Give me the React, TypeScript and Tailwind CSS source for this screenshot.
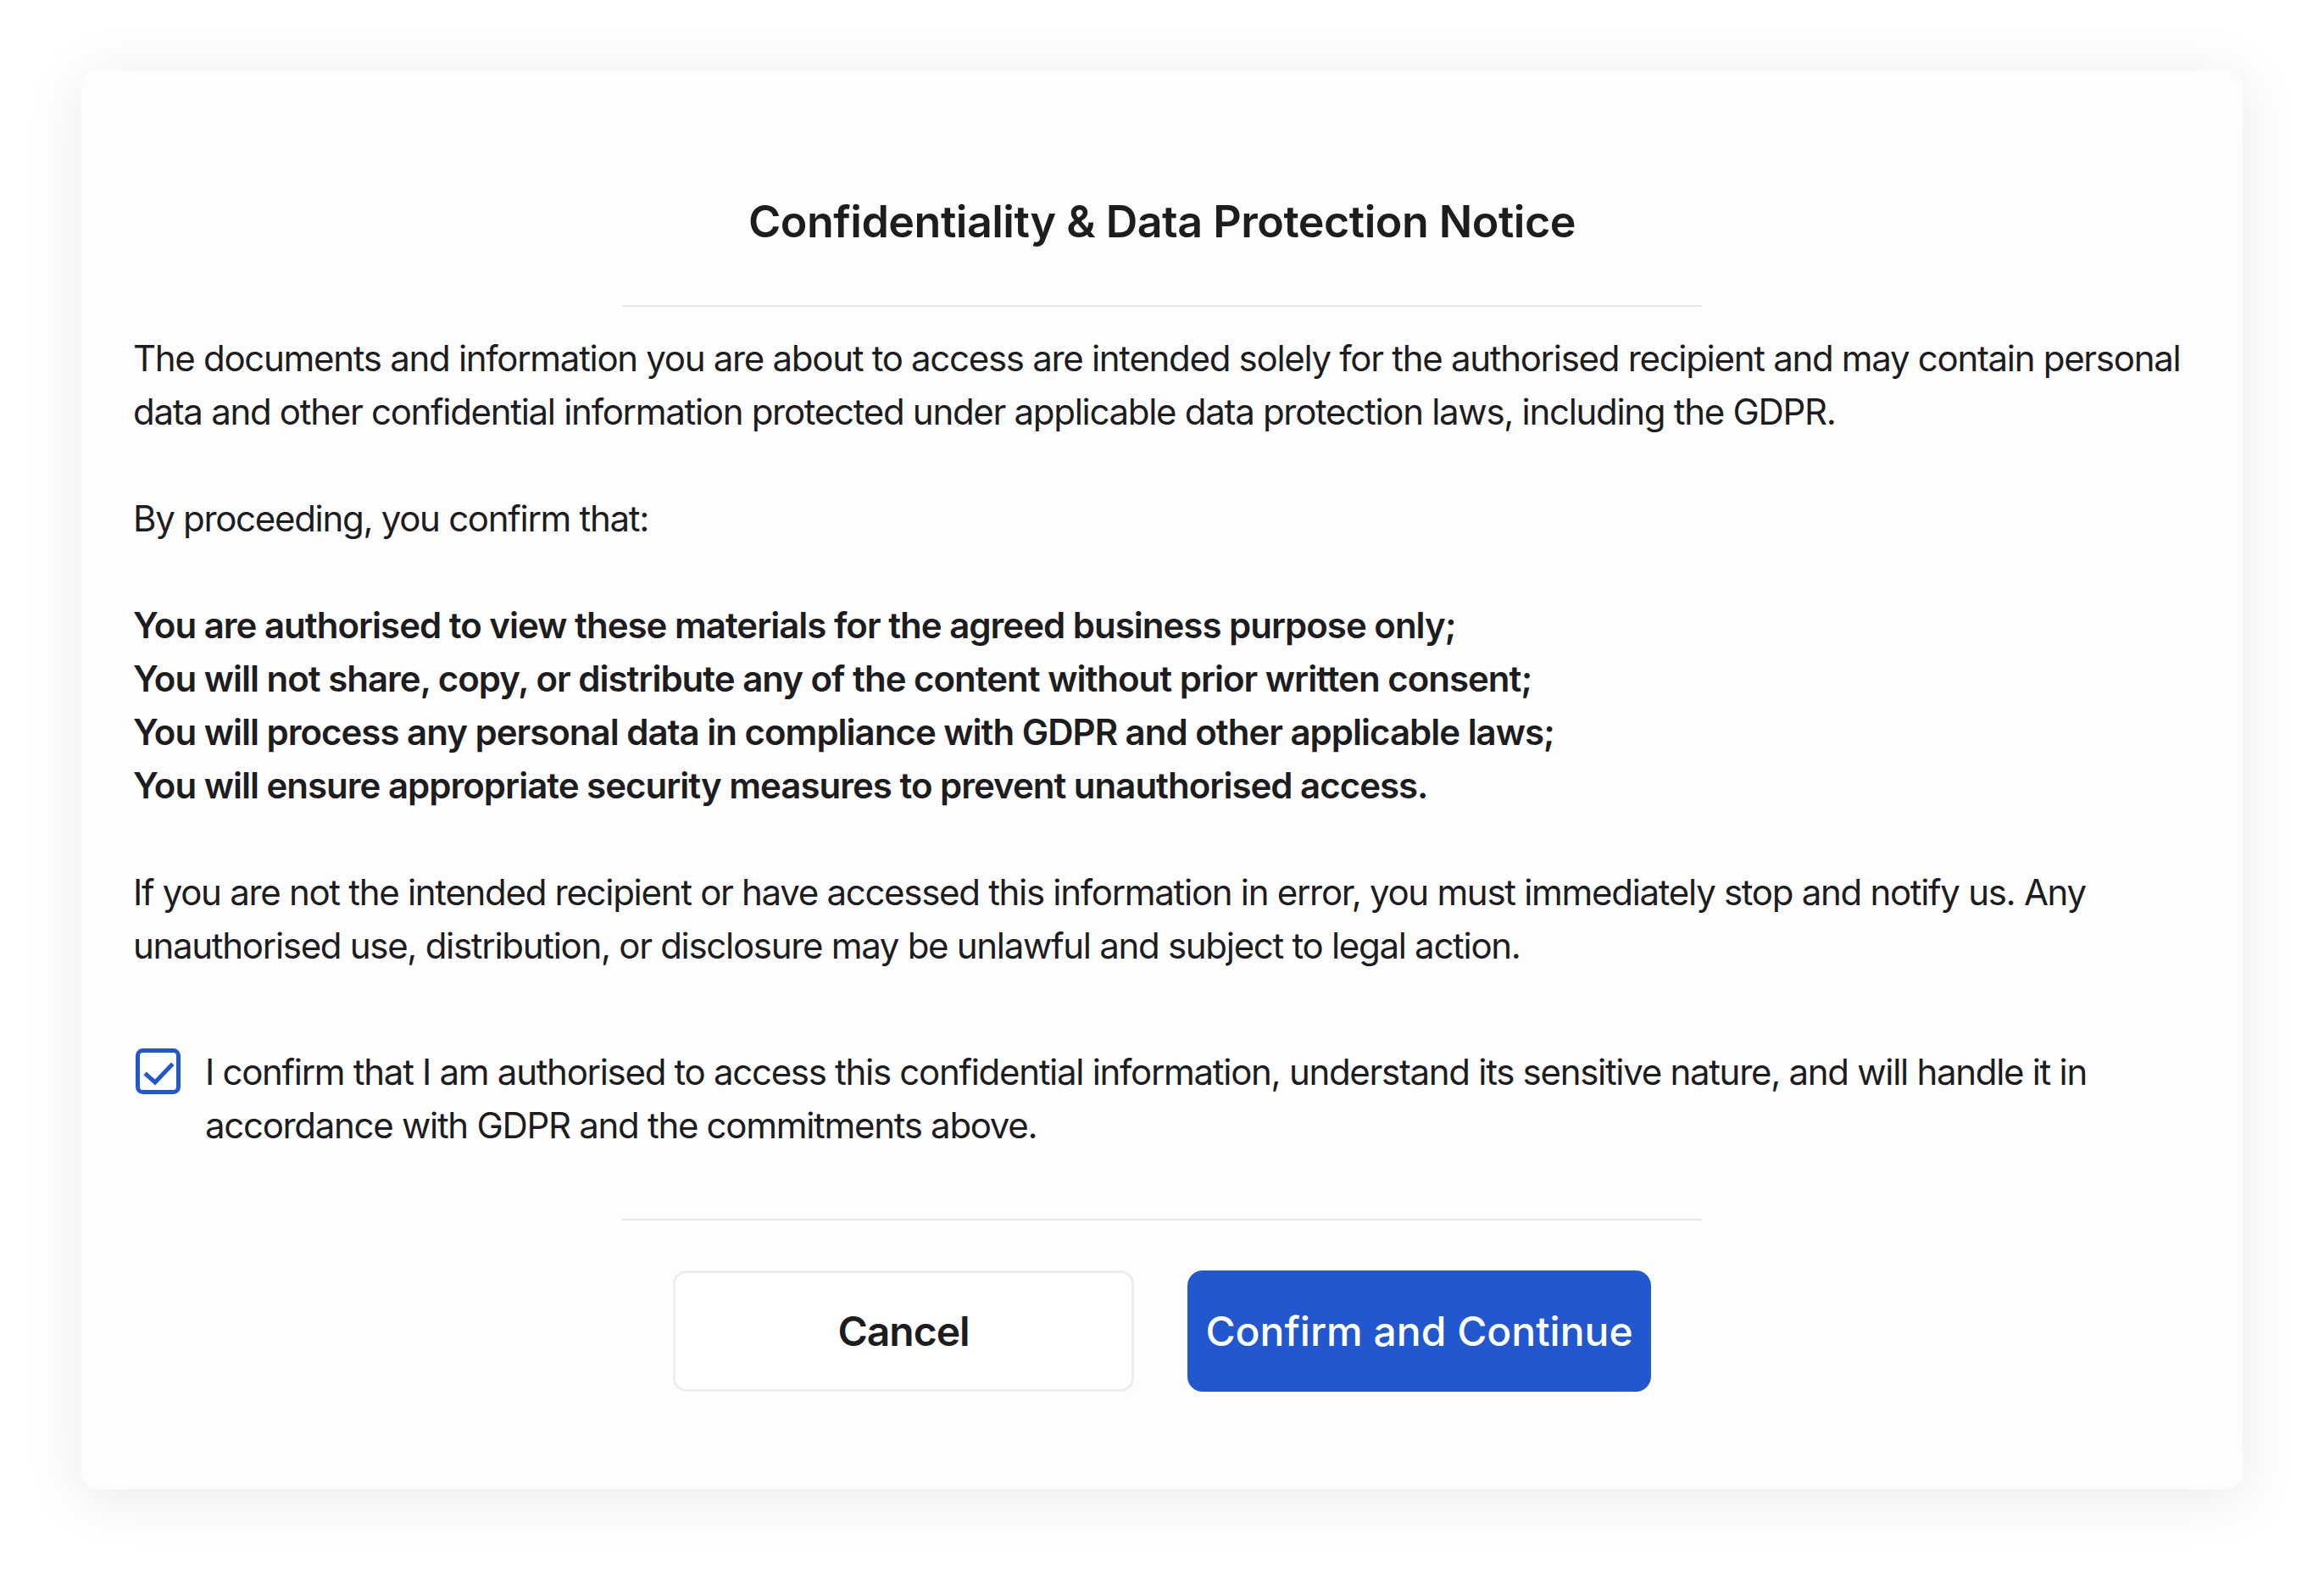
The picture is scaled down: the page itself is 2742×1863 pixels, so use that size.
import { useState } from 'react';

const commitments = [
  'You are authorised to view these materials for the agreed business purpose only;',
  'You will not share, copy, or distribute any of the content without prior written consent;',
  'You will process any personal data in compliance with GDPR and other applicable laws;',
  'You will ensure appropriate security measures to prevent unauthorised access.',
];

function CheckIcon({ checked }: { checked: boolean }) {
  return (
    <svg viewBox="0 0 53 54" className="h-[54px] w-[53px]">
      <rect x="2.5" y="2.5" width="48" height="49" rx="6" fill="#fff" stroke="#2157cf" strokeWidth="5" />
      {checked && (
        <path d="M13 31 L23 40 L42 20" fill="none" stroke="#2157cf" strokeWidth="5" strokeLinecap="square" />
      )}
    </svg>
  );
}

export default function App() {
  const [agreed, setAgreed] = useState(true);

  return (
    <div className="min-h-screen bg-white px-[96px] pt-[83px] font-['Inter',sans-serif] text-[#1d1d1f]">
      <div className="rounded-[20px] bg-[#fdfdfd] px-[61px] pt-[147px] pb-[115px] shadow-[0_10px_70px_rgba(0,0,0,0.09)]">
        <h1 className="text-center text-[52px] leading-[64px] font-semibold tracking-[-0.5px]">
          Confidentiality &amp; Data Protection Notice
        </h1>
        <div className="mx-auto mt-[66px] h-[2px] w-[1274px] bg-[#e5e5e7]" />

        <div className="mt-[29px] text-[42px] leading-[63px] tracking-[-1.3px]">
          <p>
            The documents and information you are about to access are intended solely for the authorised
            recipient and may contain personal data and other confidential information protected under
            applicable data protection laws, including the GDPR.
          </p>
          <p className="mt-[63px]">By proceeding, you confirm that:</p>
          <ul className="mt-[63px] font-semibold tracking-[-1px]">
            {commitments.map((c) => (
              <li key={c}>{c}</li>
            ))}
          </ul>
          <p className="mt-[63px]">
            If you are not the intended recipient or have accessed this information in error, you must
            immediately stop and notify us. Any unauthorised use, distribution, or disclosure may be unlawful
            and subject to legal action.
          </p>

          <label className="mt-[86px] flex cursor-pointer items-start gap-[29px]">
            <input
              type="checkbox"
              className="sr-only"
              checked={agreed}
              onChange={(e) => setAgreed(e.target.checked)}
            />
            <span className="mt-[4px] ml-[3px] shrink-0">
              <CheckIcon checked={agreed} />
            </span>
            <span>
              I confirm that I am authorised to access this confidential information, understand its sensitive
              nature, and will handle it in accordance with GDPR and the commitments above.
            </span>
          </label>
        </div>

        <div className="mx-auto mt-[79px] h-[2px] w-[1274px] bg-[#e5e5e7]" />

        <div className="mt-[59px] flex justify-center gap-[63px]">
          <button className="h-[143px] w-[544px] rounded-[16px] border-[3px] border-[#ededef] bg-white text-[48px] font-semibold tracking-[-1px]">
            Cancel
          </button>
          <button
            disabled={!agreed}
            className="h-[143px] w-[547px] rounded-[18px] bg-[#2157cf] text-[48px] font-medium text-white disabled:opacity-50"
          >
            Confirm and Continue
          </button>
        </div>
      </div>
    </div>
  );
}
